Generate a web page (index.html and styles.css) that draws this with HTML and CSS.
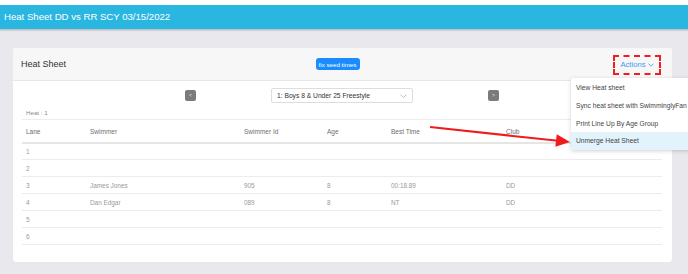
FILE: index.html
```html
<!DOCTYPE html>
<html>
<head>
<meta charset="utf-8">
<link rel="stylesheet" href="styles.css">
</head>
<body>
<div class="page">
  <div class="topbar">Heat Sheet DD vs RR SCY 03/15/2022</div>
  <div class="card">
    <div class="card-head">
      <div class="title">Heat Sheet</div>
      <button class="seed-btn">fix seed times</button>
      <div class="head-right">
        <div class="actions-wrap">
          <div class="actions">Actions
            <svg class="chev" width="6" height="4" viewBox="0 0 6 4"><path d="M0.5 0.6 L3 3.2 L5.5 0.6" fill="none" stroke="#3d9cf0" stroke-width="0.8"/></svg>
          </div>
          <div class="menu">
            <div class="menu-item">View Heat sheet</div>
            <div class="menu-item">Sync heat sheet with SwimminglyFan</div>
            <div class="menu-item">Print Line Up By Age Group</div>
            <div class="menu-item active">Unmerge Heat Sheet</div>
          </div>
        </div>
      </div>
    </div>
    <div class="card-body">
      <div class="nav">
        <div class="nav-btn">&lt;</div>
        <div class="select">1: Boys 8 &amp; Under 25 Freestyle
          <svg class="sel-chev" width="7" height="4" viewBox="0 0 7 4"><path d="M0.5 0.5 L3.5 3.4 L6.5 0.5" fill="none" stroke="#aaa" stroke-width="0.7"/></svg>
        </div>
        <div class="nav-btn">&gt;</div>
      </div>
      <div class="heat-label">Heat : 1</div>
      <table class="tbl">
        <colgroup><col class="c1"><col class="c2"><col class="c3"><col class="c4"><col class="c5"><col class="c6"></colgroup>
        <thead>
          <tr><th>Lane</th><th>Swimmer</th><th>Swimmer Id</th><th>Age</th><th>Best Time</th><th>Club</th></tr>
        </thead>
        <tbody>
          <tr><td>1</td><td></td><td></td><td></td><td></td><td></td></tr>
          <tr><td>2</td><td></td><td></td><td></td><td></td><td></td></tr>
          <tr><td>3</td><td>James Jones</td><td>905</td><td>8</td><td>00:18.89</td><td>DD</td></tr>
          <tr><td>4</td><td>Dan Edgar</td><td>089</td><td>8</td><td>NT</td><td>DD</td></tr>
          <tr><td>5</td><td></td><td></td><td></td><td></td><td></td></tr>
          <tr><td>6</td><td></td><td></td><td></td><td></td><td></td></tr>
        </tbody>
      </table>
    </div>
  </div>
  <svg class="arrow" width="688" height="274" viewBox="0 0 688 274">
    <line x1="430" y1="127" x2="558" y2="140.8" stroke="#ee1c1c" stroke-width="2"/>
    <polygon points="570,142 556.7,134.3 555.4,146.7" fill="#ee1c1c"/>
  </svg>
</div>
</body>
</html>
```

FILE: styles.css
```css
html, body {
  margin: 0;
  padding: 0;
}
body {
  background: #e9e9ed;
  font-family: "Liberation Sans", Arial, sans-serif;
  width: 688px;
  height: 274px;
  overflow: hidden;
}
.page {
  position: relative;
  width: 688px;
  height: 274px;
  padding-top: 5px;
  box-sizing: border-box;
  background: linear-gradient(#ffffff 0 5px, #e9e9ed 5px);
}
.topbar {
  height: 24px;
  background: #29b6e1;
  color: #ffffff;
  font-size: 9.6px;
  line-height: 24px;
  padding-left: 4px;
  box-shadow: 0 1px 1px #c4c4c8, 0 2px 1px #d4d4d8;
}
.card {
  margin: 19px 16px 0 13px;
  background: #ffffff;
  border-radius: 3px;
  height: 214px;
  box-shadow: 0 0 1px #dcdce0;
}
.card-head {
  height: 32px;
  background: #f7f7f7;
  border-bottom: 1px solid #e7e7e7;
  border-radius: 3px 3px 0 0;
  display: flex;
  align-items: center;
  padding: 0 11px 0 8px;
}
.title {
  flex: 1;
  font-size: 9px;
  color: #333333;
}
.seed-btn {
  border: none;
  background: #1a8cff;
  color: #ffffff;
  font-family: "Liberation Sans", Arial, sans-serif;
  font-size: 6.2px;
  height: 12px;
  width: 44px;
  padding: 0;
  border-radius: 3px;
  margin-right: 7px;
}
.head-right {
  flex: 1;
  display: flex;
  justify-content: flex-end;
}
.actions-wrap {
  position: relative;
}
.actions {
  width: 48px;
  height: 20px;
  box-sizing: border-box;
  border: 2.5px dashed #f01e1e;
  color: #3d9cf0;
  font-size: 7.7px;
  display: flex;
  align-items: center;
  justify-content: center;
  gap: 2px;
  margin-top: 1px;
}
.chev {
  display: block;
  margin-top: 1px;
}
.menu {
  position: absolute;
  left: -42px;
  top: 24px;
  width: 140px;
  background: #ffffff;
  padding-top: 1.5px;
  box-shadow: 0 1px 4px rgba(0,0,0,0.18);
  border-radius: 2px;
  z-index: 2;
}
.menu-item {
  height: 17.8px;
  line-height: 17.8px;
  padding-left: 5px;
  font-size: 6.7px;
  color: #444444;
  white-space: nowrap;
}
.menu-item.active {
  background: #e2f3fb;
}
.card-body {
  padding: 0 10px 0 9px;
}
.nav {
  display: flex;
  justify-content: center;
  align-items: center;
  gap: 75px;
  height: 15px;
  padding-top: 7px;
}
.nav-btn {
  width: 11px;
  height: 11px;
  background: #7b7b7b;
  border-radius: 2px;
  color: #e6e6e6;
  font-size: 5px;
  line-height: 11px;
  text-align: center;
}
.select {
  width: 142px;
  height: 15px;
  box-sizing: border-box;
  border: 1px solid #dddddd;
  border-radius: 2px;
  background: #ffffff;
  font-size: 6.7px;
  color: #333333;
  display: flex;
  align-items: center;
  justify-content: space-between;
  padding: 0 5px 0 5px;
}
.sel-chev {
  display: block;
}
.heat-label {
  font-size: 6.2px;
  color: #8a8a8a;
  padding-left: 4px;
  height: 13px;
  line-height: 13px;
  margin-top: 3px;
}
.tbl {
  width: 100%;
  border-collapse: collapse;
  border-top: 1px solid #ececec;
}
.c1 { width: 64px; }
.c2 { width: 154px; }
.c3 { width: 83px; }
.c4 { width: 64px; }
.c5 { width: 115px; }
.tbl th {
  font-weight: normal;
  text-align: left;
  font-size: 6.5px;
  color: #6e6e6e;
  height: 23px;
  padding: 1px 0 0 4px;
  border-bottom: 2px solid #e6e6e6;
  box-sizing: border-box;
}
.tbl td {
  font-size: 6.4px;
  color: #9a9a9a;
  height: 17px;
  padding: 0 0 0 4px;
  border-bottom: 1px solid #ececec;
  box-sizing: border-box;
}
.arrow {
  position: absolute;
  left: 0;
  top: 0;
  pointer-events: none;
  z-index: 3;
}
```
